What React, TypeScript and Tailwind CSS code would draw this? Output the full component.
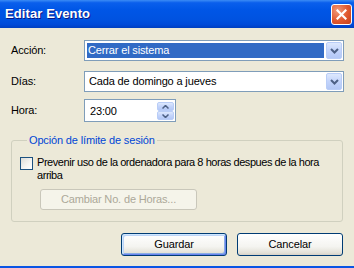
import React from 'react';

const font = "font-['Liberation_Sans',Arial,sans-serif]";

function Chevron() {
  return (
    <svg width="9" height="6" viewBox="0 0 9 6" className="block">
      <path d="M1 1 L4.5 4.5 L8 1" fill="none" stroke="#4d6185" strokeWidth="2" />
    </svg>
  );
}

function DropButton() {
  return (
    <div className="w-[16px] h-full flex items-center justify-center rounded-[2px] border border-[#b9cdf7] bg-[linear-gradient(to_bottom,#dde8fd,#c3d4fb_50%,#b3c8f6)]">
      <Chevron />
    </div>
  );
}

function Combo({ text, selected }: { text: string; selected?: boolean }) {
  return (
    <div className="flex-1 h-full border border-[#7f9db9] bg-white flex items-stretch p-[1px]">
      <div className="flex-1 flex items-center p-[1px] pr-[2px]">
        <div
          className={`flex-1 h-full flex items-center pl-[1px] ${
            selected ? 'bg-[#316ac5] text-white' : 'text-black pl-[2px]'
          }`}
        >
          {text}
        </div>
      </div>
      <DropButton />
    </div>
  );
}

function SpinHalf({ up }: { up?: boolean }) {
  return (
    <div className="flex-1 flex items-center justify-center rounded-[2px] border border-[#b9cdf7] bg-[linear-gradient(to_bottom,#dde8fd,#c3d4fb_50%,#b3c8f6)]">
      <svg width="7" height="4" viewBox="0 0 7 4" className="block">
        <path
          d={up ? 'M0.5 3.5 L3.5 0.5 L6.5 3.5' : 'M0.5 0.5 L3.5 3.5 L6.5 0.5'}
          fill="none"
          stroke="#4d6185"
          strokeWidth="1.5"
        />
      </svg>
    </div>
  );
}

function XpButton({ children, primary }: { children: React.ReactNode; primary?: boolean }) {
  return (
    <button
      className={`w-[106px] h-[23px] rounded-[3px] border border-[#003c74] text-black bg-[linear-gradient(to_bottom,#ffffff,#f4f4f0_60%,#e3e1d7_90%,#d6d0c5)] ${
        primary
          ? 'shadow-[inset_1px_1px_0_#cee7ff,inset_-1px_-1px_0_#6982ee,inset_2px_2px_0_#bcd4f6,inset_-2px_-2px_0_#89ade4]'
          : ''
      }`}
    >
      {children}
    </button>
  );
}

export default function App() {
  return (
    <div className={`w-[354px] h-[268px] flex flex-col bg-[#ece9d8] overflow-hidden text-[11px] leading-[13px] tracking-[-0.15px] ${font}`}>
      {/* Title bar */}
      <div className="h-[28px] shrink-0 flex items-center justify-between pl-[5px] pr-[2px] bg-[linear-gradient(to_bottom,#3b8cf5_0%,#0a5fec_10%,#0056e6_35%,#0052e0_70%,#004ad8_88%,#003fc0_100%)]">
        <span className="text-white font-bold text-[13px] tracking-[0.1px] [text-shadow:1px_1px_0_#0a1883] -translate-y-[1px]">
          Editar Evento
        </span>
        <div className="w-[21px] h-[21px] rounded-[3px] border border-white flex items-center justify-center bg-[radial-gradient(circle_at_30%_30%,#f19a7a,#e0582e_55%,#c4401c)]">
          <svg width="11" height="11" viewBox="0 0 11 11">
            <path d="M1.5 1.5 L9.5 9.5 M9.5 1.5 L1.5 9.5" stroke="#fff" strokeWidth="2.2" strokeLinecap="square" />
          </svg>
        </div>
      </div>

      <div className="flex-1 flex flex-col pl-[11px] pr-[10px] text-black">
        <div className="mt-[12px] h-[21px] flex items-center">
          <span className="w-[73px]">Acción:</span>
          <Combo text="Cerrar el sistema" selected />
        </div>
        <div className="mt-[10px] h-[21px] flex items-center">
          <span className="w-[73px]">Días:</span>
          <Combo text="Cada de domingo a jueves" />
        </div>
        <div className="mt-[7px] h-[23px] flex items-center">
          <span className="w-[73px]">Hora:</span>
          <div className="w-[92px] h-full border border-[#7f9db9] bg-white flex items-stretch p-[1px] pt-[2px]">
            <div className="flex-1 flex items-center pl-[4px]">23:00</div>
            <div className="w-[17px] flex flex-col">
              <SpinHalf up />
              <SpinHalf />
            </div>
          </div>
        </div>

        <fieldset className="mt-[12px] mr-[1px] h-[88px] border border-[#d0d0bf] rounded-[3px] pt-[9px] pl-[8px] pb-[12px]">
          <legend className="ml-[7px] px-[2px] text-[#0046d5]">Opción de límite de sesión</legend>
          <div className="flex items-start gap-[4px]">
            <div className="mt-[1px] w-[13px] h-[13px] shrink-0 border border-[#1c5180] bg-[linear-gradient(135deg,#dcdcd7,#f5f5f3_60%,#ffffff)]" />
            <span className="whitespace-nowrap tracking-[-0.45px]">
              Prevenir uso de la ordenadora para 8 horas despues de la hora
              <br />
              arriba
            </span>
          </div>
          <button className="mt-[7px] ml-[20px] w-[157px] h-[21px] rounded-[3px] border border-[#c9c7ba] bg-[#f5f4ea] text-[#aca899]">
            Cambiar No. de Horas...
          </button>
        </fieldset>

        <div className="mt-[11px] mr-[1px] flex justify-end gap-[10px]">
          <XpButton primary>Guardar</XpButton>
          <XpButton>Cancelar</XpButton>
        </div>
      </div>
      <div className="h-[2px] shrink-0 bg-[#0a55e4]" />
    </div>
  );
}
